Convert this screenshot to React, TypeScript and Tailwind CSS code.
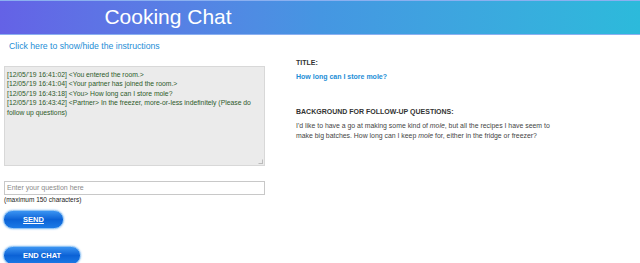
import React from "react";

const messages = [
  "[12/05/'19 16:41:02] <You entered the room.>",
  "[12/05/'19 16:41:04] <Your partner has joined the room.>",
  "[12/05/'19 16:43:18] <You> How long can I store mole?",
  "[12/05/'19 16:43:42] <Partner> In the freezer, more-or-less indefinitely (Please do follow up questions)",
];

function PillButton({ label, underline, width }: { label: string; underline?: boolean; width: string }) {
  return (
    <button
      className={`block ${width} h-[19px] rounded-full border border-[#8fc3f5] bg-gradient-to-b from-[#3a94f2] via-[#0b62d6] to-[#1c7ae6] text-white text-[7.5px] font-bold shadow-[0_0_2px_#7bb6f0] ${underline ? "underline" : ""}`}
    >
      {label}
    </button>
  );
}

export default function App() {
  return (
    <div className="w-[640px] h-[263px] overflow-hidden bg-white font-['Liberation_Sans',Arial,sans-serif]">
      <div className="h-[35px] bg-gradient-to-r from-[#6462e6] via-[#4596e2] to-[#2cbadb] border-t border-b border-[#8bb0f0]">
        <div className="w-[336px] text-center text-white text-[21px] leading-[31px]">Cooking Chat</div>
      </div>

      <div className="pl-[9px] pt-[5px] text-[8.7px] leading-[12px] text-[#1d8ed6]">
        Click here to show/hide the instructions
      </div>

      <div className="flex pt-[4px]">
        <div className="w-[265px] pl-[4px] shrink-0">
          <div className="mt-[10px] h-[100px] border border-[#d8d8d8] bg-[#ebebeb] relative px-[2px] pt-[3px]">
            {messages.map((m, i) => (
              <div key={i} className="text-[6.8px] leading-[9.4px] text-[#2d5a2a]">
                {m}
              </div>
            ))}
            <div className="absolute right-[1px] bottom-[1px] w-[5px] h-[5px] border-r border-b border-[#bbb] [clip-path:polygon(100%_0,100%_100%,0_100%)]" />
          </div>

          <div className="mt-[15px] h-[14px] border border-[#c8c8c8] bg-white px-[2px] text-[7px] leading-[12px] text-[#8a8a8a]">
            Enter your question here
          </div>
          <div className="text-[6.5px] leading-[10px] text-[#222]">(maximum 150 characters)</div>

          <div className="mt-[5px] -ml-[1px]">
            <PillButton label="SEND" underline width="w-[61px]" />
          </div>
          <div className="mt-[17px] -ml-[1px]">
            <PillButton label="END CHAT" width="w-[78px]" />
          </div>
        </div>

        <div className="pl-[31px] pt-[2px] w-[300px]">
          <div className="text-[7px] leading-[10px] font-bold text-[#333]">TITLE:</div>
          <div className="mt-[4px] text-[7px] leading-[10px] font-bold text-[#1d8ed6]">How long can I store mole?</div>
          <div className="mt-[25px] text-[7px] leading-[10px] font-bold text-[#333]">BACKGROUND FOR FOLLOW-UP QUESTIONS:</div>
          <div className="mt-[4px] text-[6.9px] leading-[10px] text-[#444] w-[262px]">
            I'd like to have a go at making some kind of <i>mole</i>, but all the recipes I have seem to make big batches. How long can I keep <i>mole</i> for, either in the fridge or freezer?
          </div>
        </div>
      </div>
    </div>
  );
}
